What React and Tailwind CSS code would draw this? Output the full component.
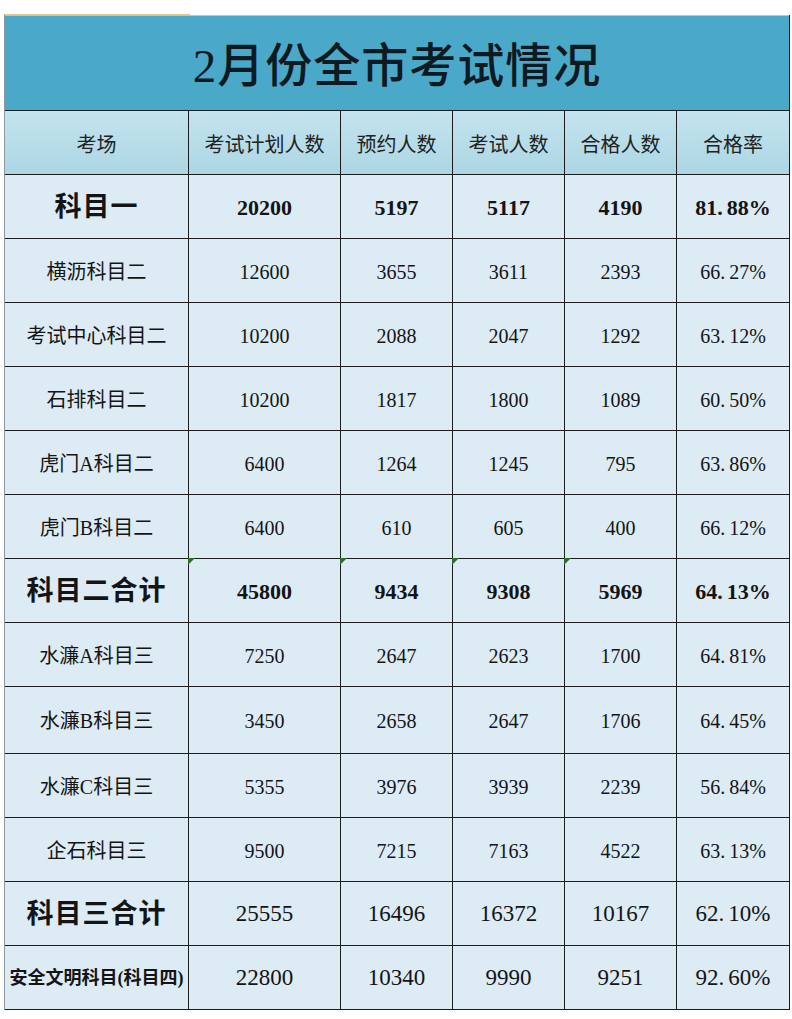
const headers = ["考场", "考试计划人数", "预约人数", "考试人数", "合格人数", "合格率"];

const rows = [
  { name: "科目一", v: ["20200", "5197", "5117", "4190", "81.88%"], kind: "total" },
  { name: "横沥科目二", v: ["12600", "3655", "3611", "2393", "66.27%"] },
  { name: "考试中心科目二", v: ["10200", "2088", "2047", "1292", "63.12%"] },
  { name: "石排科目二", v: ["10200", "1817", "1800", "1089", "60.50%"] },
  { name: "虎门A科目二", v: ["6400", "1264", "1245", "795", "63.86%"] },
  { name: "虎门B科目二", v: ["6400", "610", "605", "400", "66.12%"] },
  { name: "科目二合计", v: ["45800", "9434", "9308", "5969", "64.13%"], kind: "total", marks: true },
  { name: "水濂A科目三", v: ["7250", "2647", "2623", "1700", "64.81%"] },
  { name: "水濂B科目三", v: ["3450", "2658", "2647", "1706", "64.45%"], tall: true },
  { name: "水濂C科目三", v: ["5355", "3976", "3939", "2239", "56.84%"] },
  { name: "企石科目三", v: ["9500", "7215", "7163", "4522", "63.13%"] },
  { name: "科目三合计", v: ["25555", "16496", "16372", "10167", "62.10%"], kind: "sum" },
  { name: "安全文明科目(科目四)", v: ["22800", "10340", "9990", "9251", "92.60%"], kind: "small" },
];

// SimSun style percent: the dot takes a wide slot
const Pct = ({ value }) => {
  const [a, b] = value.split(".");
  return (
    <span>
      {a}
      <span className="mr-[4px]">.</span>
      {b}
    </span>
  );
};

const Mark = () => (
  <svg className="absolute -left-px -top-px" width="7" height="7" viewBox="0 0 7 7">
    <polygon points="0,0 7,0 0,7" fill="#2f6b2a" />
  </svg>
);

const labelClass = (kind) => {
  if (kind === "total") return "text-[27px] font-bold tracking-[1px]";
  if (kind === "sum") return "text-[27px] font-semibold tracking-[1px]";
  if (kind === "small") return "text-[18px] font-semibold";
  return "text-[20px]";
};

const numClass = (kind) => {
  if (kind === "total") return "text-[22px] font-bold";
  if (kind === "sum" || kind === "small") return "text-[23px]";
  return "text-[20px]";
};

const App = () => {
  return (
    <div className="w-[792px] h-[1019px] bg-white pt-[14px] pl-[4px] text-[#141414] font-['Liberation_Serif','Noto_Sans_CJK_SC',serif]">
      <div className="w-[186px] h-px bg-[#e6c38c]" />
      <div className="w-[786px] border-l border-l-[#8a9aa2] border-r border-r-[#1c1c1c]">
        <div className="h-[96px] bg-[#4aa8c8] border-b border-b-[#1c1c1c] border-t border-t-[#9fd0e2] flex items-center justify-center pt-[6px]">
          <span className="text-[47px] font-medium tracking-[1px] text-[#0e1a22]">2月份全市考试情况</span>
        </div>
        <div className="grid grid-cols-[184px_152px_112px_112px_112px_112px]">
          {headers.map((h, i) => (
            <div
              key={h}
              className={`h-[64px] flex items-center justify-center pt-[4px] border-b border-b-[#1c1c1c] bg-gradient-to-b from-[#c4e4ee] to-[#acd6e4] text-[20px] text-[#222] ${i < 5 ? "border-r border-r-[#1c1c1c]" : ""}`}
            >
              {h}
            </div>
          ))}
          {rows.map((r) => (
            <div key={r.name} className="contents">
              <div
                className={`${r.tall ? "h-[67px]" : "h-[64px]"} flex items-center justify-center pt-[2px] border-b border-b-[#1c1c1c] border-r border-r-[#1c1c1c] bg-[#dcebf4] whitespace-nowrap ${labelClass(r.kind)}`}
              >
                {r.name}
              </div>
              {r.v.map((val, j) => (
                <div
                  key={j}
                  className={`relative ${r.tall ? "h-[67px]" : "h-[64px]"} flex items-center justify-center pt-[2px] border-b border-b-[#1c1c1c] bg-[#dcebf4] ${j < 4 ? "border-r border-r-[#1c1c1c]" : ""} ${numClass(r.kind)}`}
                >
                  {r.marks && j < 4 && <Mark />}
                  {val.includes(".") ? <Pct value={val} /> : val}
                </div>
              ))}
            </div>
          ))}
        </div>
      </div>
    </div>
  );
};

export default App;
